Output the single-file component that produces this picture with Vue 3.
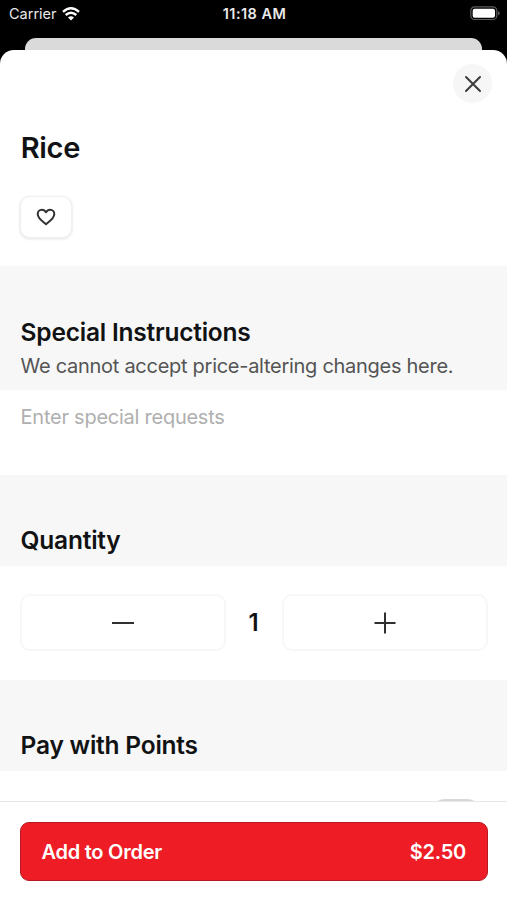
<script setup>
import { ref, computed } from 'vue'

const quantity = ref(1)
const request = ref('')
const total = computed(() => '$' + (quantity.value * 2.5).toFixed(2))
const decrease = () => { if (quantity.value > 1) quantity.value-- }
</script>

<template>
  <div class="phone">
    <header class="status">
      <div class="carrier">
        <span>Carrier</span>
        <svg class="wifi" viewBox="0 0 18 14" aria-hidden="true">
          <path d="M1 4.9Q9 -2.2 17 4.9" />
          <path d="M3.7 8Q9 3.4 14.3 8" />
          <path class="solid" d="M6 10.4Q9 7.9 12 10.4L9 13.5Z" />
        </svg>
      </div>
      <span class="time">11:18 AM</span>
      <svg class="battery" viewBox="0 0 30 15" aria-hidden="true">
        <rect class="shell" x="0.8" y="0.9" width="26" height="12.6" rx="3.8" />
        <rect class="charge" x="2.7" y="2.7" width="22.3" height="9" rx="2" />
        <path class="tip" d="M28 5q1.7.7 1.7 2.2T28 9.4z" />
      </svg>
    </header>
    <div class="back-card"></div>

    <main class="sheet">
      <div class="top">
        <button class="close" aria-label="Close">
          <svg viewBox="0 0 18 18"><path d="M2 2L16 16M16 2L2 16" /></svg>
        </button>
      </div>
      <section class="item">
        <h1>Rice</h1>
        <button class="favorite" aria-label="Favorite">
          <svg viewBox="0 0 20 18">
            <path d="M10 16.2C7.8 14.3 1.7 10.7 1.7 6.1C1.7 3.5 3.6 1.7 5.8 1.7C7.7 1.7 9.1 2.7 10 4.3C10.9 2.7 12.3 1.7 14.2 1.7C16.4 1.7 18.3 3.5 18.3 6.1C18.3 10.7 12.2 14.3 10 16.2Z" />
          </svg>
        </button>
      </section>

      <section class="heading instructions">
        <h2>Special Instructions</h2>
        <p>We cannot accept price-altering changes here.</p>
      </section>
      <textarea v-model="request" class="request" placeholder="Enter special requests"></textarea>

      <section class="heading quantity-heading"><h2>Quantity</h2></section>
      <div class="stepper">
        <button aria-label="Decrease" @click="decrease">
          <svg viewBox="0 0 22 22"><path d="M0 11H22" /></svg>
        </button>
        <span class="count">{{ quantity }}</span>
        <button aria-label="Increase" @click="quantity++">
          <svg viewBox="0 0 22 22"><path d="M0.5 11H21.5M11 0.5V21.5" /></svg>
        </button>
      </div>

      <section class="heading points-heading"><h2>Pay with Points</h2></section>
      <div class="points"><span class="toggle"></span></div>
    </main>

    <footer class="footer">
      <button class="order">
        <span>Add to Order</span>
        <span>{{ total }}</span>
      </button>
    </footer>
  </div>
</template>

<style>
body {
  margin: 0;
  background: #000;
}
</style>

<style scoped>
* {
  box-sizing: border-box;
}
.phone {
  display: flex;
  flex-direction: column;
  width: 507px;
  height: 900px;
  overflow: hidden;
  background: #000;
  color: #111213;
  font-family: Inter, sans-serif;
}
button {
  display: flex;
  align-items: center;
  justify-content: center;
  padding: 0;
  margin: 0;
  border: 0;
  background: #fff;
  font-family: inherit;
}
svg {
  display: block;
  fill: none;
}
h1,
h2,
p {
  margin: 0;
  white-space: nowrap;
}
.status {
  display: grid;
  grid-template-columns: 1fr auto 1fr;
  align-items: center;
  flex: none;
  height: 38px;
  padding: 0 7px 11px 9px;
  color: #e9e9e9;
  font-size: 14.5px;
  line-height: 20px;
}
.carrier {
  display: flex;
  align-items: center;
  gap: 5px;
}
.wifi {
  width: 18px;
  height: 14px;
  stroke: #fff;
  stroke-width: 2.4;
}
.wifi .solid {
  fill: #fff;
  stroke: none;
}
.time {
  font-weight: 600;
  font-size: 14.5px;
  letter-spacing: 0.45px;
}
.battery {
  width: 30px;
  height: 15px;
  justify-self: end;
}
.shell {
  stroke: #5c5c5c;
  stroke-width: 1.2;
}
.charge {
  fill: #fff;
}
.tip {
  fill: #5c5c5c;
}
.back-card {
  flex: none;
  height: 12px;
  margin: 0 25px;
  border-radius: 11px 11px 0 0;
  background: #dadada;
}
.sheet {
  flex: 1;
  min-height: 0;
  overflow: hidden;
  border-radius: 14px 14px 0 0;
  background: #fff;
}
.top {
  display: flex;
  justify-content: flex-end;
  height: 78px;
  padding: 14px 15px 0 0;
}
.close {
  width: 39px;
  height: 39px;
  border-radius: 50%;
  background: #f6f6f6;
}
.close svg {
  width: 18px;
  height: 18px;
  stroke: #3c3c3c;
  stroke-width: 2;
  stroke-linecap: round;
}
.item {
  height: 138px;
  padding-left: 20px;
}
h1 {
  height: 68px;
  padding-left: 0.7px;
  font-size: 29px;
  font-weight: 600;
  line-height: 40px;
  letter-spacing: -0.3px;
}
.favorite {
  width: 52px;
  height: 42px;
  border: 1px solid #f0f0f0;
  border-radius: 10px;
  box-shadow: 0 1px 2px 1px #efefef;
}
.favorite svg {
  width: 20px;
  height: 18px;
  stroke: #333;
  stroke-width: 2;
  stroke-linejoin: round;
}
.heading {
  padding-left: 20.6px;
  background: #f7f7f7;
}
h2 {
  font-size: 24.5px;
  font-weight: 600;
  line-height: 32px;
  letter-spacing: -0.22px;
}
.instructions {
  height: 124px;
  padding-top: 50px;
}
.instructions p {
  padding-top: 2px;
  color: #545454;
  font-size: 20px;
  line-height: 33px;
  letter-spacing: -0.28px;
}
.request {
  display: block;
  width: 100%;
  height: 85px;
  padding: 11px 20.6px 0;
  border: 0;
  outline: 0;
  resize: none;
  background: #fff;
  font: 20px/33px Inter, sans-serif;
  letter-spacing: -0.25px;
}
.request::placeholder {
  color: #afafaf;
  opacity: 1;
}
.quantity-heading {
  height: 91px;
  padding-top: 49px;
}
.stepper {
  display: grid;
  grid-template-columns: 206px 56px 206px;
  align-items: center;
  height: 114px;
  padding: 0 0 1px 20px;
}
.stepper button {
  height: 57px;
  border: 2px solid #f7f7f7;
  border-radius: 10px;
}
.stepper svg {
  width: 22px;
  height: 22px;
  stroke: #303030;
  stroke-width: 2;
}
.count {
  padding-right: 1px;
  text-align: center;
  font-size: 24px;
  font-weight: 600;
}
.points-heading {
  height: 91px;
  padding-top: 49px;
}
.points {
  display: flex;
  justify-content: flex-end;
  padding: 28px 24px 0 0;
}
.toggle {
  width: 54px;
  height: 32px;
  border-radius: 16px;
  background: #d8d8d8;
}
.footer {
  flex: none;
  height: 99px;
  padding: 20px 19px 0 20px;
  border-top: 1px solid #e8e8e8;
  background: #fff;
}
.order {
  justify-content: space-between;
  width: 100%;
  height: 59px;
  padding: 0 21px 0 20.5px;
  border: 1px solid #b71922;
  border-radius: 9px;
  background: #ee1c25;
  color: #fff;
  font-size: 20px;
  font-weight: 600;
  letter-spacing: -0.25px;
}
</style>
